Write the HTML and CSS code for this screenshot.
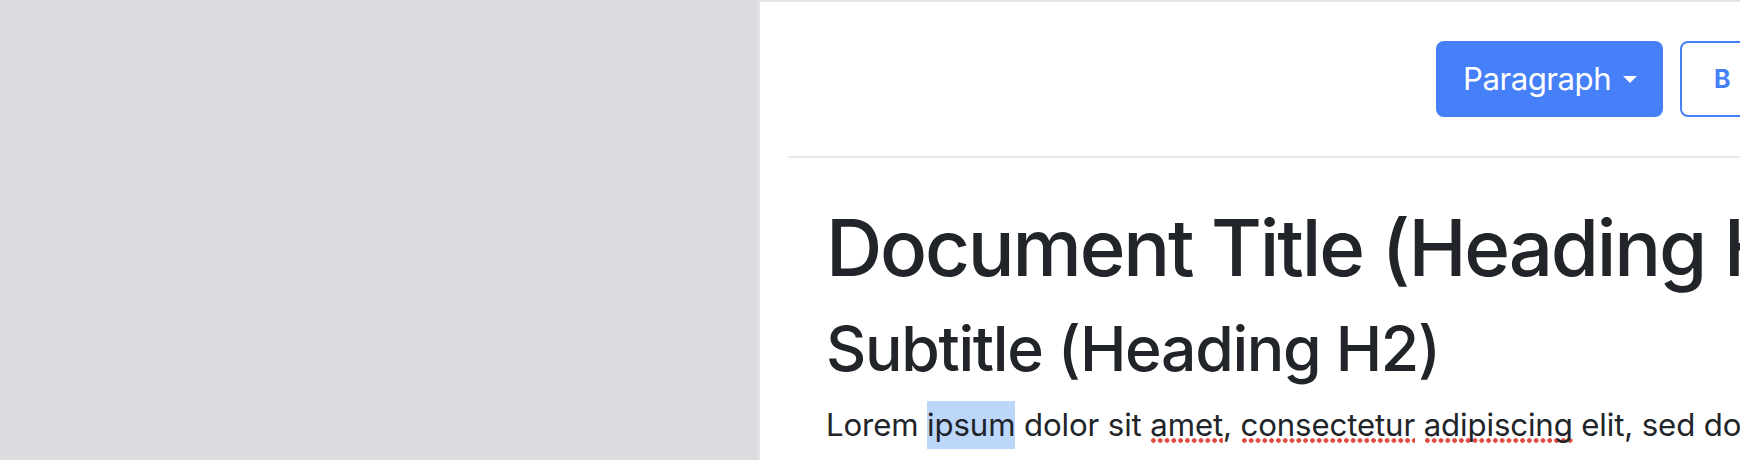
FILE: index.html
```html
<!DOCTYPE html>
<html lang="en">
<head>
    <meta charset="UTF-8">
    <meta name="viewport" content="width=device-width, initial-scale=1.0">
    <title>Editor</title>
    <link rel="stylesheet" href="styles.css">
</head>
<body>

    <div class="workspace">
        <!-- Left side panel -->
        <aside class="sidebar"></aside>

        <!-- Document page -->
        <main class="page">
            <div class="toolbar">
                <button class="btn btn-primary dropdown-toggle">Paragraph</button>
                <button class="btn btn-outline"><b>B</b></button>
                <button class="btn btn-outline"><i>I</i></button>
                <button class="btn btn-outline"><u>U</u></button>
            </div>

            <div class="content">
                <h1>Document Title (Heading H1)</h1>
                <h2>Subtitle (Heading H2)</h2>
                <p>Lorem <span class="selected">ipsum</span> dolor sit <span class="misspelled">amet</span>, <span class="misspelled">consectetur</span> <span class="misspelled">adipiscing</span> elit, sed do eiusmod tempor incididunt ut labore et dolore magna aliqua.</p>
            </div>
        </main>
    </div>

</body>
</html>
```

FILE: styles.css
```css
html {
    font-size: 31.2px;
}

body {
    margin: 0;
    overflow: hidden;
    font-family: Inter, "Noto Sans", sans-serif;
    color: #212529;
    background-color: #dcdde0;
}

.workspace {
    display: grid;
    grid-template-columns: 758px 1900px;
    height: 460px;
}

.sidebar {
    background-color: #dcdde0;
}

.page {
    background-color: #fff;
    border-left: 2px solid #e4e4e6;
    border-top: 2px solid #e4e4e6;
}

/* Toolbar */
.toolbar {
    display: flex;
    align-items: center;
    gap: 17px;
    height: 154px;
    margin-left: 28px;
    padding-left: 648px;
    border-bottom: 2px solid #e9e9eb;
}

.btn {
    height: 76px;
    font-family: inherit;
    font-size: 1rem;
    letter-spacing: -0.016em;
    border-radius: 8px;
    cursor: pointer;
    white-space: nowrap;
}

.btn-primary {
    display: flex;
    align-items: center;
    padding: 0 26px 0 27px;
    background-color: #4680f8;
    color: #fff;
    border: none;
}

.dropdown-toggle::after {
    content: "";
    margin-left: 12px;
    border-top: 7.5px solid #fff;
    border-left: 7.5px solid transparent;
    border-right: 7.5px solid transparent;
}

.btn-outline {
    min-width: 84px;
    padding: 0 20px;
    background-color: #fff;
    color: #4680f8;
    border: 2px solid #4680f8;
    font-size: 25px;
}

/* Document content */
.content {
    padding: 43px 0 0 66px;
}

h1 {
    font-size: 2.5rem;
    font-weight: 500;
    letter-spacing: -0.028em;
    line-height: 1.2;
    margin: 0 0 17px;
}

h2 {
    font-size: 2rem;
    font-weight: 500;
    letter-spacing: -0.021em;
    line-height: 1.2;
    margin: 0 0 0.5rem;
}

p {
    margin: 0;
    line-height: 1.5;
    letter-spacing: -0.004em;
}

.selected {
    padding: 5px 0;
    background-color: #bdd7fb;
}

.misspelled {
    background-image: radial-gradient(circle, #e24a3f 2px, transparent 2.6px);
    background-repeat: repeat-x;
    background-position: 0 32px;
    background-size: 6.8px 5px;
}
```
